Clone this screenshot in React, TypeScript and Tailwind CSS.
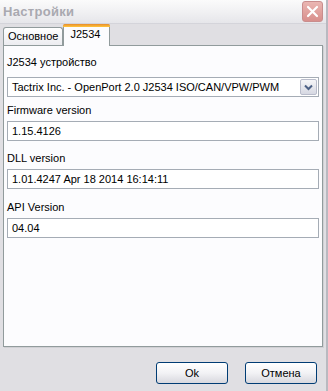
import React from "react";

const font = { fontFamily: '"Liberation Sans", Arial, sans-serif' };

function Field({ label, value, mt }: { label: string; value: string; mt: string }) {
  return (
    <div className={"flex flex-col " + mt}>
      <div className="h-[13px] leading-[13px] text-[11px] text-black">{label}</div>
      <div className="mt-[4px] h-[20px] border border-[#a5acb5] bg-white flex items-center pl-[4px] text-[11px] text-black">
        {value}
      </div>
    </div>
  );
}

export default function App() {
  return (
    <div
      className="w-[328px] h-[391px] bg-[#e0dfe3] flex flex-col border-r-2 border-[#b9b9c0] overflow-hidden"
      style={font}
    >
      {/* Title bar */}
      <div className="h-[24px] flex items-center justify-between pl-[3px] pr-[3px] bg-gradient-to-b from-[#fbfbfb] via-[#f1f1f3] to-[#e6e6ea] border-b border-[#d4d4da]">
        <span className="text-[13px] font-bold text-[#a9a9b0] tracking-[0.3px]">Настройки</span>
        <div className="w-[21px] h-[21px] rounded-[3px] border border-[#c98d8d] bg-gradient-to-b from-[#eab6b2] to-[#d88f8c] flex items-center justify-center">
          <svg width="13" height="13" viewBox="0 0 13 13">
            <path d="M2 2 L11 11 M11 2 L2 11" stroke="white" strokeWidth="2.2" strokeLinecap="round" />
          </svg>
        </div>
      </div>

      {/* Tabs */}
      <div className="flex items-end px-[3px] h-[21px] relative z-10">
        <div className="h-[18px] px-[4px] border border-b-0 border-[#919b9c] rounded-t-[3px] bg-gradient-to-b from-[#ffffff] to-[#ececf0] text-[11px] leading-[17px] text-black">
          Основное
        </div>
        <div className="h-[22px] w-[47px] -mb-[1px] border border-b-0 border-[#919b9c] rounded-t-[3px] bg-[#fcfcfe] flex flex-col">
          <div className="h-[3px] bg-gradient-to-b from-[#e68b2c] to-[#ffc73c] rounded-t-[2px] -mx-[1px] -mt-[1px]" />
          <div className="text-[11px] leading-[14px] pl-[6px] text-black">J2534</div>
        </div>
      </div>

      {/* Panel */}
      <div className="mx-[3px] h-[302px] border border-[#919b9c] bg-[#fcfcfe] px-[3px] pt-[10px] flex flex-col shadow-[1px_1px_0_#d0d0d4]">
        <div className="flex flex-col">
          <div className="h-[13px] leading-[13px] text-[11px] text-black">J2534 устройство</div>
          <div className="mt-[8px] h-[20px] border border-[#a5acb5] bg-white flex items-center text-[11px] text-black">
            <span className="pl-[4px] flex-1">Tactrix Inc. - OpenPort 2.0 J2534 ISO/CAN/VPW/PWM</span>
            <div className="w-[17px] h-[16px] mr-[1px] rounded-[2px] border border-[#b9bccb] bg-gradient-to-b from-[#f6f6f8] to-[#d6d8e2] flex items-center justify-center">
              <svg width="9" height="7" viewBox="0 0 9 7">
                <path d="M1 1.5 L4.5 5 L8 1.5" stroke="#4d6185" strokeWidth="2" fill="none" />
              </svg>
            </div>
          </div>
        </div>
        <Field label="Firmware version" value="1.15.4126" mt="mt-[7px]" />
        <Field label="DLL version" value="1.01.4247 Apr 18 2014 16:14:11" mt="mt-[11px]" />
        <Field label="API Version" value="04.04" mt="mt-[12px]" />
      </div>

      {/* Buttons */}
      <div className="flex justify-end gap-[17px] pr-[9px] mt-[15px]">
        <button className="w-[72px] h-[22px] rounded-[3px] border border-[#003c74] bg-gradient-to-b from-[#ffffff] via-[#f2f2f5] to-[#d8d8de] text-[11px] text-black">
          Ok
        </button>
        <button className="w-[72px] h-[22px] rounded-[3px] border border-[#003c74] bg-gradient-to-b from-[#ffffff] via-[#f2f2f5] to-[#d8d8de] text-[11px] text-black">
          Отмена
        </button>
      </div>
    </div>
  );
}
